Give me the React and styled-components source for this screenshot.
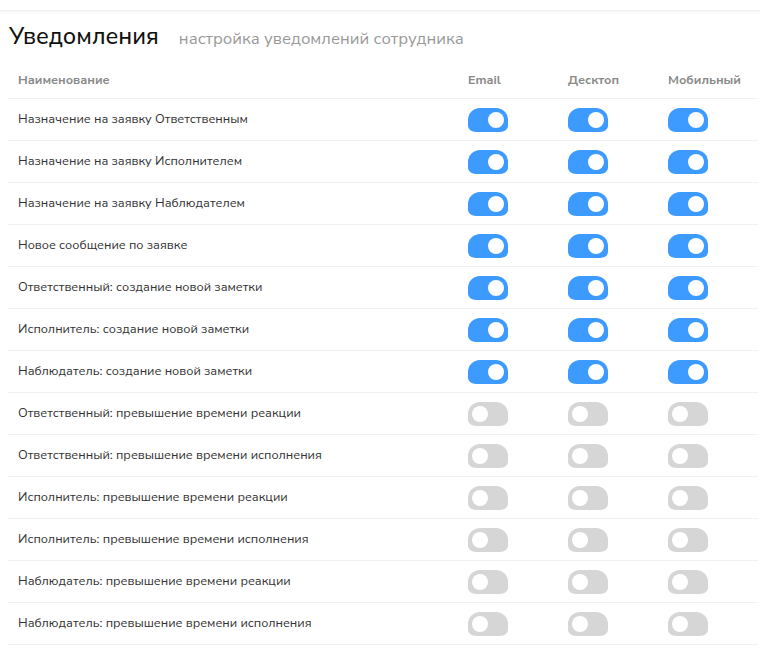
import styled, { createGlobalStyle } from "styled-components";

const GlobalStyle = createGlobalStyle`
  body {
    margin: 0;
    background: #fff;
    font-family: "Nunito Sans", "Noto Sans", "Open Sans", sans-serif;
  }
`;

const events = [
  { name: "Назначение на заявку Ответственным", on: true },
  { name: "Назначение на заявку Исполнителем", on: true },
  { name: "Назначение на заявку Наблюдателем", on: true },
  { name: "Новое сообщение по заявке", on: true },
  { name: "Ответственный: создание новой заметки", on: true },
  { name: "Исполнитель: создание новой заметки", on: true },
  { name: "Наблюдатель: создание новой заметки", on: true },
  { name: "Ответственный: превышение времени реакции", on: false },
  { name: "Ответственный: превышение времени исполнения", on: false },
  { name: "Исполнитель: превышение времени реакции", on: false },
  { name: "Исполнитель: превышение времени исполнения", on: false },
  { name: "Наблюдатель: превышение времени реакции", on: false },
  { name: "Наблюдатель: превышение времени исполнения", on: false },
];

const channels = ["Email", "Десктоп", "Мобильный"];

export default function App() {
  return (
    <>
      <GlobalStyle />
      <TopBar />
      <Page>
        <Heading>
          <Title>Уведомления</Title>
          <Subtitle>настройка уведомлений сотрудника</Subtitle>
        </Heading>
        <Table>
          <HeadRow>
            <HeadCell>Наименование</HeadCell>
            {channels.map((c) => (
              <HeadCell key={c}>{c}</HeadCell>
            ))}
          </HeadRow>
          {events.map((e) => (
            <Row key={e.name}>
              <NameCell>{e.name}</NameCell>
              {channels.map((c) => (
                <ToggleCell key={c}>
                  <Toggle $on={e.on}>
                    <Knob $on={e.on} />
                  </Toggle>
                </ToggleCell>
              ))}
            </Row>
          ))}
        </Table>
      </Page>
    </>
  );
}

const TopBar = styled.div`
  height: 10px;
  border-bottom: 1px solid #f0f0f0;
  box-shadow: 0 2px 3px rgba(0, 0, 0, 0.03);
`;

const Page = styled.div`
  padding: 0 2px 0 8px;
`;

const Heading = styled.div`
  display: flex;
  align-items: baseline;
  gap: 20px;
  padding: 9px 0 2px 1px;
  height: 40px;
`;

const Title = styled.h1`
  margin: 0;
  font-size: 23.5px;
  font-weight: 500;
  color: #111;
`;

const Subtitle = styled.span`
  font-size: 16.7px;
  color: #999;
`;

const Table = styled.div`
  display: grid;
  grid-template-columns: 450px 100px 100px 100px;
`;

const HeadRow = styled.div`
  display: contents;
`;

const HeadCell = styled.div`
  box-sizing: border-box;
  height: 37px;
  padding: 0 10px 1px;
  display: flex;
  align-items: center;
  font-size: 12.6px;
  font-weight: 700;
  color: #8a8a8a;
  border-bottom: 1px solid #f0f0f0;
`;

const Row = styled.div`
  display: contents;
`;

const NameCell = styled.div`
  box-sizing: border-box;
  height: 42px;
  padding: 0 10px 2px;
  display: flex;
  align-items: center;
  font-size: 12.7px;
  color: #333;
  border-bottom: 1px solid #f0f0f0;
`;

const ToggleCell = styled.div`
  box-sizing: border-box;
  height: 42px;
  padding: 0 10px;
  display: flex;
  align-items: center;
  border-bottom: 1px solid #f0f0f0;
`;

const Toggle = styled.div`
  position: relative;
  width: 40px;
  height: 24px;
  border-radius: 12px 12px 8px 8px / 12px 12px 6px 6px;
  background: ${(p) => (p.$on ? "#3d9bff" : "#d6d6d6")};
`;

const Knob = styled.div`
  position: absolute;
  top: 4px;
  left: ${(p) => (p.$on ? "20px" : "4px")};
  width: 16px;
  height: 16px;
  border-radius: 50%;
  background: #fff;
`;
